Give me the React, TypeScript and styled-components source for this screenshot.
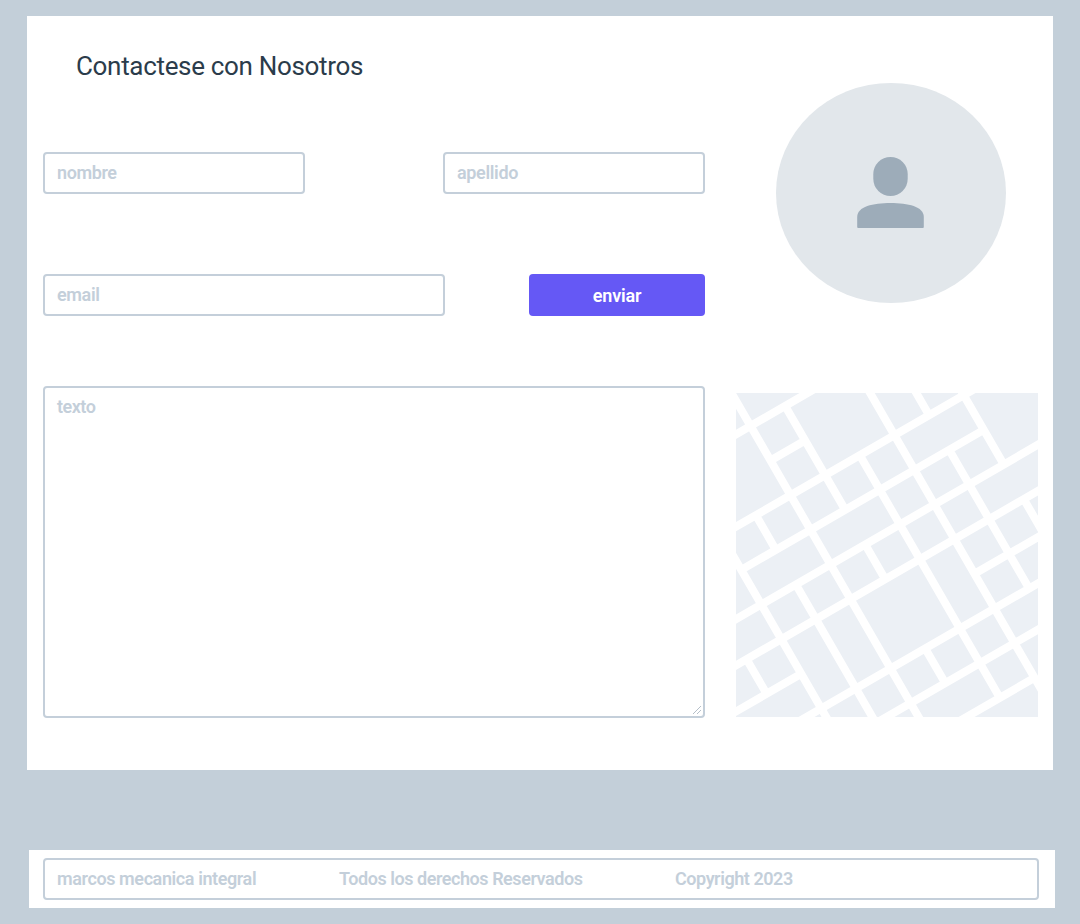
import React from "react";
import styled, { createGlobalStyle } from "styled-components";

const line = "#c4cfda";

const GlobalStyle = createGlobalStyle`
  * { box-sizing: border-box; }
  body {
    margin: 0;
    background: #c3cfd9;
    font-family: Roboto, "Liberation Sans", sans-serif;
  }
`;

const Page = styled.div`
  display: flex;
  flex-direction: column;
  gap: 80px;
  width: 1080px;
  height: 924px;
  padding: 16px 25px 16px 27px;
  overflow: hidden;
`;

const Card = styled.main`
  display: grid;
  grid-template-columns: 662px 302px;
  column-gap: 31px;
  width: 1026px;
  height: 754px;
  padding: 0 16px;
  background: #fff;
`;

const Form = styled.form`
  display: flex;
  flex-direction: column;
  margin: 0;
`;

const Title = styled.h1`
  margin: 33px 0 69px 33px;
  height: 34px;
  line-height: 34px;
  font-size: 26px;
  font-weight: 400;
  letter-spacing: -0.32px;
  white-space: nowrap;
  color: #2b3c4b;
`;

const Row = styled.div<{ $gap: number }>`
  display: flex;
  justify-content: space-between;
  margin-bottom: ${(p) => p.$gap}px;
`;

const Field = styled.input<{ $width: number; $tracking: number }>`
  width: ${(p) => p.$width}px;
  height: 42px;
  padding: 0 12px 2px;
  border: 2px solid ${line};
  border-radius: 4px;
  background: #fff;
  font: 600 18px Roboto, "Liberation Sans", sans-serif;
  letter-spacing: ${(p) => p.$tracking}px;
  outline: none;
  &::placeholder { color: ${line}; opacity: 1; }
`;

const SendButton = styled.button`
  width: 176px;
  height: 42px;
  padding: 0;
  border: 0;
  border-radius: 4px;
  background: #6558f5;
  color: #fff;
  font: 600 18px Roboto, "Liberation Sans", sans-serif;
  letter-spacing: -0.2px;
`;

const MessageBox = styled.div`
  position: relative;
  height: 332px;
`;

const Message = styled.textarea`
  display: block;
  width: 100%;
  height: 100%;
  padding: 8px 12px;
  border: 2px solid ${line};
  border-radius: 4px;
  resize: none;
  outline: none;
  font: 600 18px/22px Roboto, "Liberation Sans", sans-serif;
  letter-spacing: -0.5px;
  &::placeholder { color: ${line}; opacity: 1; }
`;

const ResizeGrip = styled.svg`
  position: absolute;
  right: 3px;
  bottom: 3px;
`;

const Side = styled.aside`
  display: flex;
  flex-direction: column;
  gap: 90px;
  padding-top: 67px;
`;

const Avatar = styled.svg`
  display: block;
  margin-left: 40px;
`;

const MapView = styled.svg`
  display: block;
`;

const Footer = styled.footer`
  width: 1026px;
  height: 58px;
  margin-left: 2px;
  padding: 8px 16px 8px 14px;
  background: #fff;
`;

const FooterBox = styled.div`
  display: grid;
  grid-template-columns: 282px 336px 1fr;
  align-items: center;
  height: 42px;
  padding: 0 0 2px 12px;
  border: 2px solid ${line};
  border-radius: 4px;
  font-size: 18px;
  font-weight: 600;
  white-space: nowrap;
  color: ${line};
`;

const FooterText = styled.span<{ $tracking: number }>`
  letter-spacing: ${(p) => p.$tracking}px;
`;

// Streets lie on a square lattice turned by 30 degrees.
const SLOPE = 0.57735;
const STEP = 46.2;

const crossing = (street: number, avenue: number) => {
  const c = 41.3 + STEP * street;
  const d = -143.1 + STEP * avenue;
  const x = (d + SLOPE * c) / (1 + SLOPE * SLOPE);
  return `${x.toFixed(2)} ${(c - SLOPE * x).toFixed(2)}`;
};

// [street, first avenue, last avenue]
const streets = [
  [0, -4, 14], [1, 3, 4], [2, -4, 14], [3, 1, 8], [4, -4, 14], [5, -4, 14],
  [6, -4, 1], [6, 6, 14], [7, -4, 14], [8, -4, 14], [9, -4, 6],
];

// [avenue, first street, last street]
const avenues = [
  [0, 5, 6], [1, -5, 14], [2, 2, 3], [2, 4, 14], [3, -5, 14], [4, 0, 3],
  [4, 4, 5], [4, 7, 8], [5, 2, 9], [6, -5, 14], [7, -5, 2], [7, 3, 7],
  [8, 2, 4], [8, 0, 2], [8, 5, 14],
];

const roads = [
  ...streets.map(([s, a, b]) => `M${crossing(s, a)}L${crossing(s, b)}`),
  ...avenues.map(([v, a, b]) => `M${crossing(a, v)}L${crossing(b, v)}`),
].join("");

export default function App() {
  return (
    <>
      <GlobalStyle />
      <Page>
        <Card>
          <Form>
            <Title>Contactese con Nosotros</Title>
            <Row $gap={80}>
              <Field $width={262} $tracking={-0.4} placeholder="nombre" />
              <Field $width={262} $tracking={-0.35} placeholder="apellido" />
            </Row>
            <Row $gap={70}>
              <Field $width={402} $tracking={-0.35} placeholder="email" />
              <SendButton type="button">enviar</SendButton>
            </Row>
            <MessageBox>
              <Message placeholder="texto" />
              <ResizeGrip width="10" height="10" viewBox="0 0 10 10">
                <path d="M1 9L9 1M5 9L9 5" stroke="#b5bfc9" strokeWidth="1" fill="none" />
              </ResizeGrip>
            </MessageBox>
          </Form>
          <Side>
            <Avatar width="230" height="220" viewBox="0 0 230 220">
              <ellipse cx="115" cy="110" rx="115" ry="110" fill="#e2e7eb" />
              <rect x="97.3" y="74" width="34.4" height="39" rx="17.2" ry="17.2" fill="#9dacb9" />
              <path
                d="M81.2 144V134C81.2 123.5 97 120 114.5 120S147.800 123.500 147.800 134V144Q147.800 145 146.800 145H82.200Q81.200 145 81.200 144Z"
                fill="#9dacb9"
              />
            </Avatar>
            <MapView width="302" height="324" viewBox="0 0 302 324">
              <rect width="302" height="324" fill="#ecf0f5" />
              <path d={roads} stroke="#fff" strokeWidth="8" fill="none" />
            </MapView>
          </Side>
        </Card>
        <Footer>
          <FooterBox>
            <FooterText $tracking={-0.4}>marcos mecanica integral</FooterText>
            <FooterText $tracking={-0.45}>Todos los derechos Reservados</FooterText>
            <FooterText $tracking={-0.45}>Copyright 2023</FooterText>
          </FooterBox>
        </Footer>
      </Page>
    </>
  );
}
